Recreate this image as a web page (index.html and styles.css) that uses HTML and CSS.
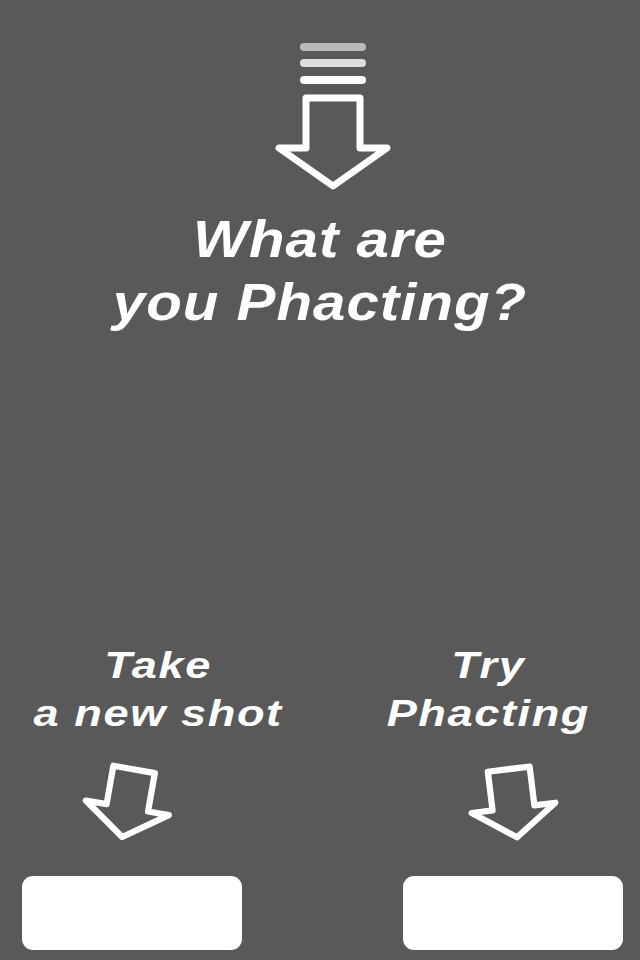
FILE: index.html
```html
<!DOCTYPE html>
<html lang="en">
<head>
<meta charset="utf-8">
<title>Phacting</title>
<link rel="stylesheet" href="styles.css">
</head>
<body>
<main class="screen">
  <section class="top">
    <div class="pull-icon">
      <div class="bar bar-1"></div>
      <div class="bar bar-2"></div>
      <div class="bar bar-3"></div>
      <svg class="arrow arrow-big" viewBox="0 0 120 100" width="120" height="100">
        <path d="M33 5 L87 5 L87 55 L114 55 L60 93 L6 55 L33 55 Z"/>
      </svg>
    </div>
    <h1 class="title">What are<br>you Phacting?</h1>
  </section>
  <div class="spacer"></div>
  <section class="actions">
    <div class="action action-left">
      <p class="label">Take<br>a new shot</p>
      <svg class="arrow arrow-small tilt-left" viewBox="0 0 120 100" width="94" height="78">
        <path d="M33 5 L87 5 L87 55 L114 55 L60 93 L6 55 L33 55 Z"/>
      </svg>
      <button class="btn" type="button"></button>
    </div>
    <div class="action action-right">
      <p class="label">Try<br>Phacting</p>
      <svg class="arrow arrow-small tilt-right" viewBox="0 0 120 100" width="94" height="78">
        <path d="M33 5 L87 5 L87 55 L114 55 L60 93 L6 55 L33 55 Z"/>
      </svg>
      <button class="btn" type="button"></button>
    </div>
  </section>
</main>
</body>
</html>
```

FILE: styles.css
```css
html, body {
  margin: 0;
  padding: 0;
  background: #595959;
}

.screen {
  width: 640px;
  height: 960px;
  display: flex;
  flex-direction: column;
  background: #595959;
  font-family: "Liberation Sans", Arial, sans-serif;
  color: #ffffff;
  overflow: hidden;
}

.top {
  display: flex;
  flex-direction: column;
  align-items: center;
  padding-top: 43px;
}

.pull-icon {
  display: flex;
  flex-direction: column;
  align-items: center;
  margin-left: 26px;
}

.bar {
  width: 66px;
  height: 8px;
  border-radius: 4px;
  margin-bottom: 8px;
}

.bar-1 { background: #b9b9b9; }
.bar-2 { background: #dedede; margin-bottom: 9px; }
.bar-3 { background: #ffffff; margin-bottom: 9px; }

.arrow {
  display: block;
  overflow: visible;
}

.arrow path {
  fill: none;
  stroke: #ffffff;
  stroke-linejoin: round;
}

.arrow-big path {
  stroke-width: 7;
}

.arrow-small path {
  stroke-width: 8;
}

.title {
  margin: 15px 0 0;
  font-size: 52px;
  line-height: 63px;
  font-weight: 700;
  font-style: italic;
  letter-spacing: 0.9px;
  text-align: center;
  transform: scaleX(1.12);
}

.spacer {
  flex: 1;
}

.actions {
  display: flex;
  justify-content: space-between;
  padding: 0 17px 10px 22px;
}

.action {
  width: 220px;
  display: flex;
  flex-direction: column;
  align-items: center;
}

.label {
  margin: 0;
  font-size: 37px;
  line-height: 48px;
  font-weight: 700;
  font-style: italic;
  letter-spacing: 1.3px;
  text-align: center;
  white-space: nowrap;
  transform: scaleX(1.22);
}

.action-left .label {
  margin-left: 52px;
}

.action-right .label {
  margin-right: 50px;
}

.arrow-small {
  margin-top: 27px;
}

.tilt-left {
  transform: rotate(10deg);
  margin-right: 8px;
}

.tilt-right {
  transform: rotate(-7deg);
}

.btn {
  margin-top: 33px;
  width: 220px;
  height: 74px;
  border: none;
  border-radius: 11px;
  background: #ffffff;
  padding: 0;
}
```
